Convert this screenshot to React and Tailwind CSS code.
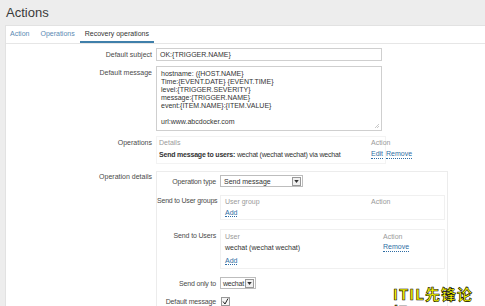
export default function App() {
  const label = "text-right text-[#4a4a4a] pr-[4px] shrink-0 whitespace-nowrap";
  const link = "text-[#2e6da4] border-b border-dotted border-[#2e6da4] leading-[8px]";

  return (
    <div className="relative w-[485px] h-[306px] overflow-hidden bg-[#ededed] text-[7px] leading-[9px] text-[#333]" style={{ fontFamily: '"Liberation Sans", Arial, sans-serif' }}>
      <div className="h-[25px] pl-[6px] flex items-center text-[13px] leading-[16px] text-[#3a3a3a]">Actions</div>

      <div className="ml-[5px] h-[281px] bg-white border-l border-t border-[#e2e2e2]">
        {/* tabs */}
        <div className="h-[18px] flex items-end pl-[4px] border-b border-[#e6e6e6]">
          <div className="pb-[5px] text-[#5a8ab3]">Action</div>
          <div className="pb-[5px] ml-[11px] text-[#5a8ab3]">Operations</div>
          <div className="pb-[3px] ml-[5px] px-[5px] text-[#333] border-b-2 border-[#3f7faa]">Recovery operations</div>
        </div>

        {/* subject */}
        <div className="mt-[4px] flex items-center">
          <div className={`${label} w-[150px]`}>Default subject</div>
          <div className="w-[226px] h-[13px] border border-[#cfcfcf] px-[3px] flex items-center">OK:{"{"}TRIGGER.NAME{"}"}</div>
        </div>

        {/* message */}
        <div className="mt-[5px] flex items-start">
          <div className={`${label} w-[150px] pt-[2px]`}>Default message</div>
          <div className="relative w-[226px] h-[65px] border border-[#cfcfcf] px-[4px] pt-[3px] leading-[8px]">
            <div>hostname: ({"{"}HOST.NAME{"}"}</div>
            <div>Time:{"{"}EVENT.DATE{"}"} {"{"}EVENT.TIME{"}"}</div>
            <div>level:{"{"}TRIGGER.SEVERITY{"}"}</div>
            <div>message:{"{"}TRIGGER.NAME{"}"}</div>
            <div>event:{"{"}ITEM.NAME{"}"}:{"{"}ITEM.VALUE{"}"}</div>
            <div className="mt-[8px]">url:www.abcdocker.com</div>
            <svg className="absolute right-[1px] bottom-[1px]" width="6" height="6" viewBox="0 0 6 6">
              <path d="M5 1L1 5M5 3L3 5" stroke="#bbb" strokeWidth="0.8" />
            </svg>
          </div>
        </div>

        {/* operations */}
        <div className="mt-[5px] flex items-start">
          <div className={`${label} w-[150px] pt-[2px]`}>Operations</div>
          <div className="w-[230px] h-[28px] border border-[#f3f3f3] pl-[2px] pt-[1px]">
            <div className="flex text-[#9a9a9a]">
              <div className="w-[212px] shrink-0">Details</div>
              <div>Action</div>
            </div>
            <div className="flex mt-[3px]">
              <div className="w-[212px] shrink-0 whitespace-nowrap overflow-hidden tracking-[-0.2px]"><span className="font-bold">Send message to users:</span> wechat (wechat wechat) via wechat</div>
              <div className="flex gap-[3px]">
                <span className={link}>Edit</span>
                <span className={link}>Remove</span>
              </div>
            </div>
          </div>
        </div>

        {/* operation details */}
        <div className="mt-[7px] flex items-start">
          <div className={`${label} w-[150px] pt-[1px]`}>Operation details</div>
          <div className="w-[292px] h-[140px] border border-[#ececec] pt-[3px]">
            <div className="flex items-center">
              <div className={`${label} w-[63px] tracking-[-0.15px]`}>Operation type</div>
              <div className="w-[83px] h-[12px] border border-[#bdbdbd] flex items-center justify-between pl-[3px] pr-[1px]">
                <span>Send message</span>
                <div className="w-[9px] h-[9px] border border-[#999] bg-[#f0f0f0] flex items-center justify-center">
                  <svg width="5" height="3" viewBox="0 0 6 4"><path d="M0 0H6L3 4Z" fill="#333" /></svg>
                </div>
              </div>
            </div>

            <div className="mt-[8px] flex items-start">
              <div className={`${label} w-[63px] pt-[1px] tracking-[-0.2px]`}>Send to User groups</div>
              <div className="w-[225px] h-[25px] border border-[#f0f0f0] pl-[4px] pt-[1px]">
                <div className="flex text-[#9a9a9a]">
                  <div className="w-[146px]">User group</div>
                  <div>Action</div>
                </div>
                <div className="mt-[2px]"><span className={link}>Add</span></div>
              </div>
            </div>

            <div className="mt-[9px] flex items-start">
              <div className={`${label} w-[63px] pt-[2px] tracking-[-0.15px]`}>Send to Users</div>
              <div className="w-[225px] h-[40px] border border-[#f0f0f0] pl-[4px] pt-[2px]">
                <div className="flex text-[#9a9a9a]">
                  <div className="w-[158px]">User</div>
                  <div>Action</div>
                </div>
                <div className="flex mt-[2px]">
                  <div className="w-[158px]">wechat (wechat wechat)</div>
                  <span className={link}>Remove</span>
                </div>
                <div className="mt-[4px]"><span className={link}>Add</span></div>
              </div>
            </div>

            <div className="mt-[8px] flex items-center">
              <div className={`${label} w-[63px] tracking-[-0.15px]`}>Send only to</div>
              <div className="w-[36px] h-[12px] border border-[#bdbdbd] flex items-center justify-between pl-[2px] pr-[1px]">
                <span className="tracking-[-0.2px]">wechat</span>
                <div className="w-[9px] h-[9px] border border-[#999] bg-[#f0f0f0] flex items-center justify-center">
                  <svg width="5" height="3" viewBox="0 0 6 4"><path d="M0 0H6L3 4Z" fill="#333" /></svg>
                </div>
              </div>
            </div>

            <div className="mt-[8px] flex items-center">
              <div className={`${label} w-[63px] tracking-[-0.15px]`}>Default message</div>
              <div className="ml-[1px] w-[9px] h-[9px] border border-[#999] bg-[#f6f6f6] flex items-center justify-center">
                <svg width="7" height="7" viewBox="0 0 7 7"><path d="M1 3.5L3 6L6 0.5" stroke="#222" strokeWidth="1" fill="none" /></svg>
              </div>
            </div>
          </div>
        </div>
      </div>

      <div
        className="absolute left-[393px] top-[285px] text-[15px] leading-[18px] font-bold text-[#ffff00] tracking-[1px]"
        style={{ fontFamily: '"Noto Sans CJK SC", "Liberation Sans", sans-serif', WebkitTextStroke: "0.6px #000" }}
      >
        ITIL先锋论坛
      </div>
    </div>
  );
}
